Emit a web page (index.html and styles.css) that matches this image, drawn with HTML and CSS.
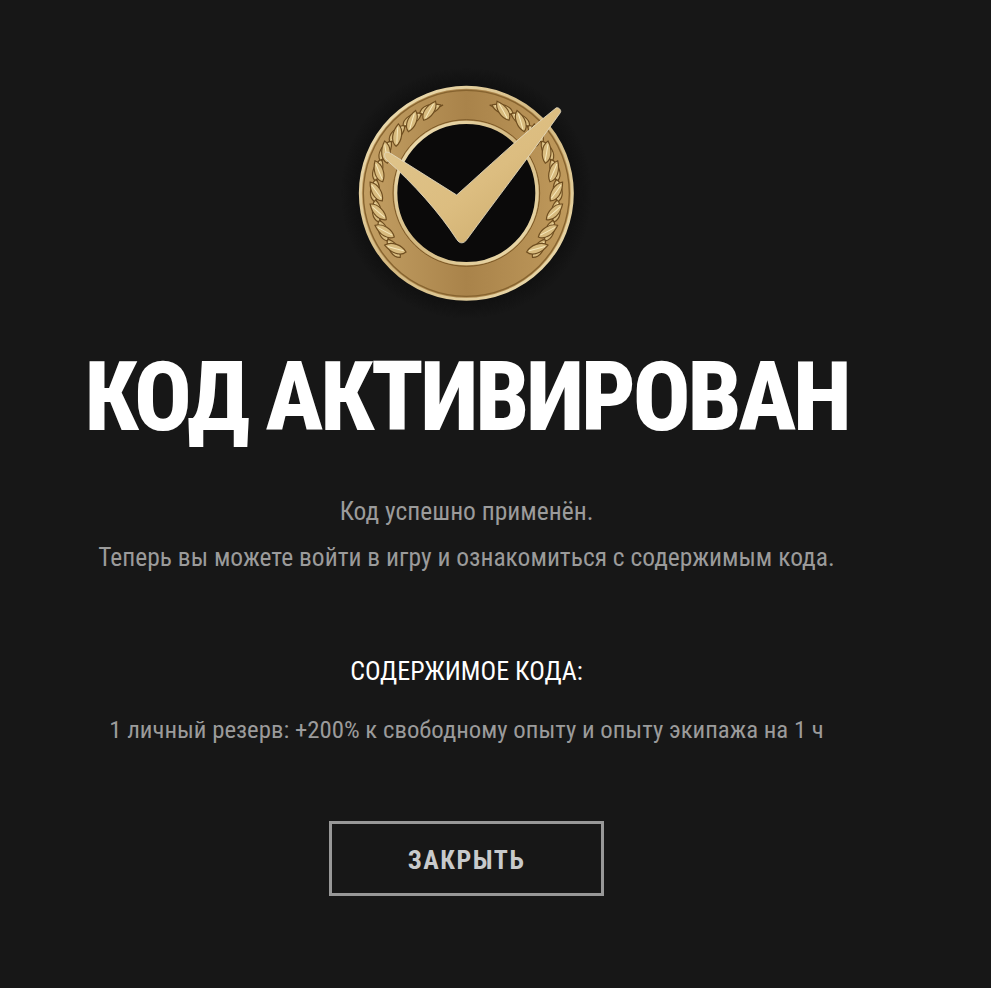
FILE: index.html
```html
<!DOCTYPE html>
<html lang="ru">
<head>
<meta charset="utf-8">
<title>Код активирован</title>
<link rel="stylesheet" href="styles.css">
</head>
<body>
<main class="panel">
  <svg class="medal" viewBox="0 0 750 690" width="250" height="230" aria-hidden="true">
    <defs>
      <radialGradient id="halo">
        <stop offset=".8" stop-color="#0e0e0e"/>
        <stop offset="1" stop-color="#0e0e0e" stop-opacity="0"/>
      </radialGradient>
      <linearGradient id="ring" x1="0" y1="0" x2="1" y2="0">
        <stop offset="0" stop-color="#c4a064"/>
        <stop offset=".5" stop-color="#a9834a"/>
        <stop offset="1" stop-color="#c09a5c"/>
      </linearGradient>
      <linearGradient id="rim" x1="0" y1="0" x2="1" y2="1">
        <stop offset="0" stop-color="#f2e4ba"/>
        <stop offset=".5" stop-color="#d3b880"/>
        <stop offset="1" stop-color="#efe0b4"/>
      </linearGradient>
      <linearGradient id="tick" x1="0" y1="0" x2="1" y2="1">
        <stop offset="0" stop-color="#e0c68e"/>
        <stop offset=".55" stop-color="#dcbd80"/>
        <stop offset="1" stop-color="#c9a868"/>
      </linearGradient>
      <g id="leaf">
        <path d="M0 0C8-20 38-25 66-13C54 8 20 13 0 0Z" fill="#d8bb7e" stroke="#6f4e20" stroke-width="3.5"/>
        <path d="M8 0C22-4 38-8 56-12" stroke="#f6e8bc" stroke-width="3" fill="none"/>
      </g>
      <g id="pair">
        <path d="M379 604H312" stroke="#6f4e20" stroke-width="4" fill="none"/>
        <use href="#leaf" transform="translate(385 616) rotate(198)"/>
        <use href="#leaf" transform="translate(385 592) rotate(162)"/>
      </g>
    </defs>
    <circle class="halo" cx="379" cy="340" r="375" fill="url(#halo)"/>
    <circle cx="379" cy="340" r="318" fill="url(#ring)" stroke="url(#rim)" stroke-width="9"/>
    <circle cx="379" cy="340" r="309" fill="none" stroke="#86632f" stroke-width="4"/>
    <g>
      <use href="#pair" transform="rotate(47 379 339)"/>
      <use href="#pair" transform="rotate(60 379 339)"/>
      <use href="#pair" transform="rotate(73 379 339)"/>
      <use href="#pair" transform="rotate(86 379 339)"/>
      <use href="#pair" transform="rotate(99 379 339)"/>
      <use href="#pair" transform="rotate(112 379 339)"/>
      <use href="#pair" transform="rotate(125 379 339)"/>
      <use href="#pair" transform="rotate(138 379 339)"/>
      <use href="#pair" transform="rotate(151 379 339)"/>
    </g>
    <g transform="translate(758 0) scale(-1 1)">
      <use href="#pair" transform="rotate(47 379 339)"/>
      <use href="#pair" transform="rotate(60 379 339)"/>
      <use href="#pair" transform="rotate(73 379 339)"/>
      <use href="#pair" transform="rotate(86 379 339)"/>
      <use href="#pair" transform="rotate(99 379 339)"/>
      <use href="#pair" transform="rotate(112 379 339)"/>
      <use href="#pair" transform="rotate(125 379 339)"/>
      <use href="#pair" transform="rotate(138 379 339)"/>
      <use href="#pair" transform="rotate(151 379 339)"/>
    </g>
    <circle cx="379" cy="339" r="220" fill="none" stroke="#7d5a28" stroke-width="3"/>
    <circle cx="379" cy="339" r="212" fill="#0b0a0a" stroke="url(#rim)" stroke-width="10"/>
    <path d="M134 226C132 216 142 214 150 219L350 345C440 265 540 170 648 84C654 80 666 90 661 98C560 240 460 370 381 478C372 492 358 492 350 478C300 400 220 310 140 240C136 236 134 232 134 226Z" fill="url(#tick)" stroke="#e4dcc4" stroke-width="2.5"/>
  </svg>
  <h1 class="title">КОД АКТИВИРОВАН</h1>
  <p class="text first">Код успешно применён.</p>
  <p class="text">Теперь вы можете войти в игру и ознакомиться с содержимым кода.</p>
  <h2 class="subtitle">СОДЕРЖИМОЕ КОДА:</h2>
  <p class="text reward">1 личный резерв: +200% к свободному опыту и опыту экипажа на 1 ч</p>
  <button class="close" type="button">ЗАКРЫТЬ</button>
</main>
</body>
</html>
```
FILE: styles.css
```css
html, body {
  margin: 0;
  padding: 0;
  background: #171717;
}
body {
  width: 991px;
  height: 988px;
  overflow: hidden;
  font-family: Roboto, "Liberation Sans", sans-serif;
  font-stretch: 75%;
}
.panel {
  width: 933px;
  display: flex;
  flex-direction: column;
  align-items: center;
  text-align: center;
}
.medal {
  display: block;
  margin: 80px 3px 0 0;
  flex: none;
  overflow: visible;
  filter: blur(0.5px);
}
.title {
  margin: 33px 0 0;
  font-size: 96px;
  line-height: 108px;
  font-weight: 800;
  letter-spacing: -3.2px;
  color: #fff;
  white-space: nowrap;
}
.text {
  margin: 0;
  font-size: 25.5px;
  line-height: 32px;
  color: #9b9b9b;
  white-space: nowrap;
}
.text.first {
  margin: 44px 0 14px;
}
.subtitle {
  margin: 82px 0 0;
  font-size: 26px;
  line-height: 32px;
  font-weight: 400;
  color: #fff;
  white-space: nowrap;
}
.text.reward {
  margin-top: 27px;
  font-size: 24.8px;
}
.close {
  margin-top: 75px;
  width: 275px;
  height: 75px;
  box-sizing: border-box;
  padding: 2px 0 0;
  background: transparent;
  border: 3px solid #989898;
  color: #c8cacc;
  font-family: inherit;
  font-stretch: inherit;
  font-size: 26px;
  font-weight: 700;
  letter-spacing: 1.5px;
}
```
